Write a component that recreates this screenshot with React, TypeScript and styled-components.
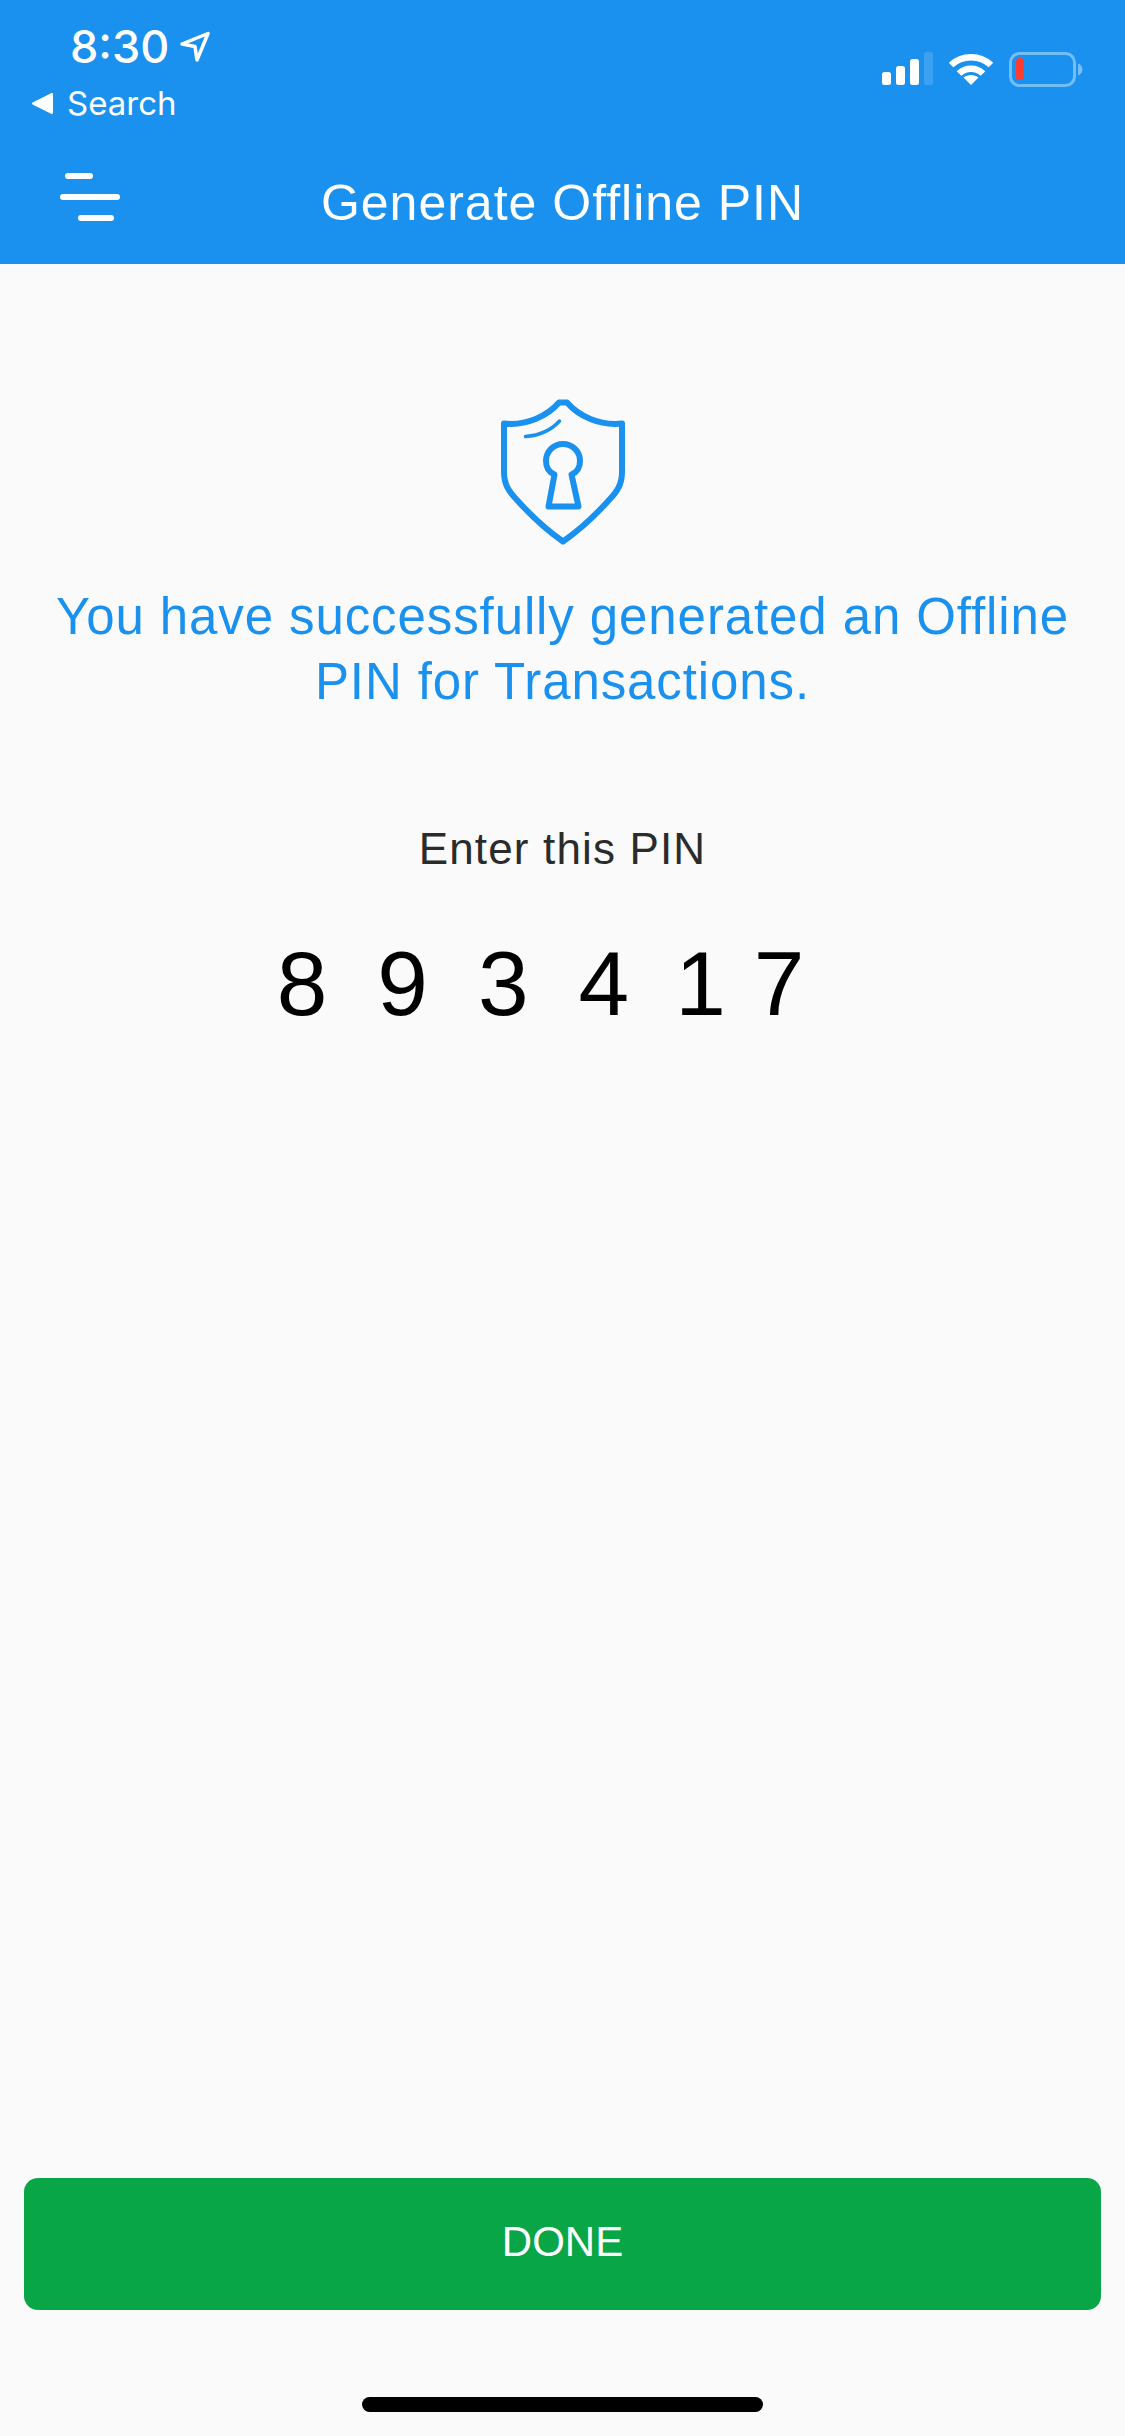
import React from 'react';
import styled, { createGlobalStyle } from 'styled-components';

const BLUE = '#1a91ee';
const PIN = [
  { digit: '8', kern: 0 },
  { digit: '9', kern: 0 },
  { digit: '3', kern: 0 },
  { digit: '4', kern: 0 },
  { digit: '1', kern: -4 },
  { digit: '7', kern: -22 },
];

const GlobalStyle = createGlobalStyle`
  html, body {
    margin: 0;
    padding: 0;
    background: #fafafa;
  }
`;

const Page = styled('div')`
  width: 1125px;
  height: 2436px;
  display: flex;
  flex-direction: column;
  overflow: hidden;
  background: #fafafa;
  font-family: 'Liberation Sans', Arial, sans-serif;
`;

const Header = styled('header')`
  height: 264px;
  flex-shrink: 0;
  display: flex;
  flex-direction: column;
  background: ${BLUE};
  color: #fff;
`;

const StatusBar = styled('div')`
  height: 128px;
  display: flex;
  justify-content: space-between;
  box-sizing: border-box;
  padding: 21px 42px 0 32px;
`;

const StatusLeft = styled('div')`
  display: flex;
  flex-direction: column;
`;

const TimeRow = styled('div')`
  display: flex;
  align-items: center;
  gap: 10px;
  padding-left: 38px;
  height: 52px;
`;

const Time = styled('span')`
  font-family: Inter, sans-serif;
  font-size: 45px;
  font-weight: 500;
  line-height: 52px;
`;

const BackRow = styled('div')`
  display: flex;
  align-items: center;
  gap: 14px;
  height: 40px;
  margin-top: 10px;
`;

const BackLabel = styled('span')`
  font-family: Inter, sans-serif;
  font-size: 33px;
  font-weight: 400;
  line-height: 40px;
`;

const StatusIcons = styled('div')`
  display: flex;
  align-items: flex-start;
  gap: 15px;
  padding-top: 31px;
`;

const NavBar = styled('nav')`
  flex: 1;
  display: grid;
  grid-template-columns: 1fr auto 1fr;
  align-items: center;
  padding-top: 14px;
`;

const MenuButton = styled('button')`
  justify-self: start;
  display: flex;
  margin: 0 0 12px 60px;
  padding: 0;
  border: 0;
  background: none;
`;

const Title = styled('h1')`
  margin: 0;
  font-size: 50px;
  font-weight: 400;
  line-height: 56px;
  letter-spacing: 1px;
`;

const Content = styled('main')`
  flex: 1;
  display: flex;
  flex-direction: column;
  align-items: center;
  padding-top: 118px;
`;

const Shield = styled('svg')`
  display: block;
  width: 200px;
  height: 180px;
`;

const Message = styled('p')`
  margin: 22px 0 0;
  width: 1060px;
  color: ${BLUE};
  font-size: 51px;
  font-weight: 400;
  line-height: 65px;
  letter-spacing: 0.9px;
  text-align: center;
`;

const PinLabel = styled('p')`
  margin: 110px 0 0;
  color: #2b2b2b;
  font-size: 44px;
  line-height: 50px;
  letter-spacing: 1.150px;
`;

const PinRow = styled('div')`
  display: flex;
  gap: 50px;
  margin-top: 58px;
  padding-right: 44px;
  color: #000;
  font-size: 91px;
  line-height: 104px;
`;

const PinDigit = styled('span')<{ $kern: number }>`
  margin-left: ${(props) => props.$kern}px;
`;

const Footer = styled('footer')`
  flex-shrink: 0;
  display: flex;
  flex-direction: column;
  align-items: center;
  padding: 0 24px 24px;
`;

const DoneButton = styled('button')`
  width: 100%;
  height: 132px;
  padding: 0 0 5px;
  border: 0;
  border-radius: 14px;
  background: #08a647;
  color: #fff;
  font-family: inherit;
  font-size: 42px;
`;

const HomeBar = styled('div')`
  width: 401px;
  height: 15px;
  margin-top: 87px;
  border-radius: 8px;
  background: #000;
`;

const LocationIcon = () => (
  <svg width="32" height="32" viewBox="0 0 32 32" fill="none" stroke="#fff" strokeWidth="3.500" strokeLinejoin="round">
    <path d="M3 13 29 2.500 18 29 16 15.500Z" />
  </svg>
);

const BackIcon = () => (
  <svg width="21" height="21" viewBox="0 0 21 21" fill="#fff" stroke="#fff" strokeWidth="2" strokeLinejoin="round">
    <path d="M1 10.500 20 1V20Z" />
  </svg>
);

const SignalIcon = () => (
  <svg width="51" height="33" viewBox="0 0 51 33" fill="#fff">
    <rect x="0" y="20" width="9" height="13" rx="2.500" />
    <rect x="14" y="14" width="9" height="19" rx="2.500" />
    <rect x="28" y="7" width="9" height="26" rx="2.500" />
    <rect x="42" y="0" width="9" height="33" rx="2.500" fillOpacity="0.15" />
  </svg>
);

const WifiIcon = () => (
  <svg width="46" height="33" viewBox="0 0 46 33" fill="none" stroke="#fff" strokeWidth="6.500">
    <path d="M3 13C14 2.500 32 2.500 43 13" />
    <path d="M11 21.500C17.500 15 28.500 15 35 21.500" />
    <path d="M23 33 15.500 25.500C19.500 22 26.500 22 30.500 25.500Z" fill="#fff" stroke="none" />
  </svg>
);

const BatteryIcon = () => (
  <svg width="74" height="35" viewBox="0 0 74 35">
    <rect x="1.500" y="1.500" width="64" height="32" rx="9" fill="none" stroke="#fff" strokeOpacity="0.4" strokeWidth="3" />
    <rect x="7" y="6" width="8" height="22" rx="3.500" fill="#ff3b30" />
    <path d="M69 11.500C72 12.500 73.500 15 73.500 17.500S72 22.500 69 23.500Z" fill="#fff" fillOpacity="0.4" />
  </svg>
);

const MenuIcon = () => (
  <svg width="60" height="48" viewBox="0 0 60 48" fill="#fff">
    <rect x="5" y="0" width="28" height="6" rx="3" />
    <rect x="0" y="21" width="60" height="6" rx="3" />
    <rect x="18" y="42" width="36" height="6" rx="3" />
  </svg>
);

const ShieldIcon = () => (
  <Shield viewBox="1.500 1 200 180" fill="none" stroke={BLUE} strokeWidth="6" strokeLinecap="round" strokeLinejoin="round">
    <path d="M97.500 21.500H105.500C117 35 138 45 160.500 42.500V91C160.500 103 156 110 148 118.500C135 133 118 149 101.500 160.500C85 149 68 133 55 118.500C47 110 42.500 103 42.500 91V42.500C65 45 86 35 97.500 21.500Z" />
    <path d="M64 55.500C77 54.500 89 50 98 40" strokeWidth="3.500" />
    <path d="M93 93.500C86 90.500 84.500 85 84.500 80A17 17 0 0 1 118.500 80C118.500 85 117 90.500 110 93.500L117 125.500H87Z" />
  </Shield>
);

export default function App() {
  return (
    <Page>
      <GlobalStyle />
      <Header>
        <StatusBar>
          <StatusLeft>
            <TimeRow>
              <Time>8:30</Time>
              <LocationIcon />
            </TimeRow>
            <BackRow>
              <BackIcon />
              <BackLabel>Search</BackLabel>
            </BackRow>
          </StatusLeft>
          <StatusIcons>
            <SignalIcon />
            <WifiIcon />
            <BatteryIcon />
          </StatusIcons>
        </StatusBar>
        <NavBar>
          <MenuButton aria-label="Menu">
            <MenuIcon />
          </MenuButton>
          <Title>Generate Offline PIN</Title>
        </NavBar>
      </Header>
      <Content>
        <ShieldIcon />
        <Message>You have successfully generated an Offline PIN for Transactions.</Message>
        <PinLabel>Enter this PIN</PinLabel>
        <PinRow>
          {PIN.map(({ digit, kern }, index) => (
            <PinDigit key={index} $kern={kern}>
              {digit}
            </PinDigit>
          ))}
        </PinRow>
      </Content>
      <Footer>
        <DoneButton>DONE</DoneButton>
        <HomeBar />
      </Footer>
    </Page>
  );
}
